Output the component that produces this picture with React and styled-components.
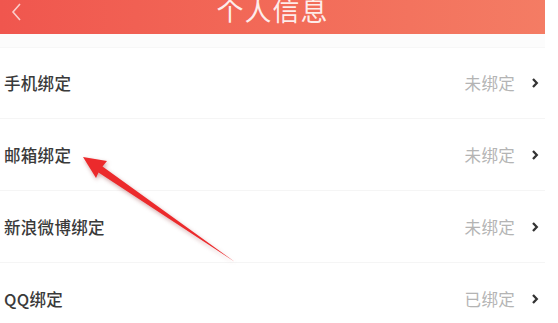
import React from 'react'
import styled, { createGlobalStyle } from 'styled-components'

const GlobalStyle = createGlobalStyle`
  html, body {
    margin: 0;
    padding: 0;
    background: #ffffff;
    font-family: "Noto Sans CJK SC", "Noto Sans", sans-serif;
    overflow: hidden;
  }
`

const Page = styled.div`
  position: relative;
  width: 545px;
  height: 323px;
  overflow: hidden;
  background: #ffffff;
`

const Header = styled.div`
  height: 34px;
  display: flex;
  align-items: flex-start;
  justify-content: center;
  position: relative;
  background: linear-gradient(90deg, #f0564e 0%, #f26a58 50%, #f47c64 100%);
  overflow: hidden;
`

const Back = styled.div`
  position: absolute;
  left: 10px;
  top: 2px;
  width: 14px;
  height: 18px;
`

const Title = styled.div`
  color: rgba(255, 255, 255, 0.88);
  font-size: 27px;
  line-height: 27px;
  margin-top: -4px;
  letter-spacing: 1px;
`

const Gap = styled.div`
  height: 13px;
  background: #fcfcfc;
  border-bottom: 1px solid #f7f7f7;
`

const List = styled.div`
  display: flex;
  flex-direction: column;
`

const Row = styled.div`
  height: 72px;
  display: flex;
  align-items: center;
  justify-content: space-between;
  padding: 0 4px 0 4px;
  margin-top: ${({ first }) => (first ? '-1px' : '0')};
  border-bottom: 1px solid #f5f5f5;
  box-sizing: border-box;
`

const Label = styled.div`
  font-size: 16.5px;
  font-weight: 500;
  color: #3a3a3a;
  letter-spacing: 0.3px;
`

const Side = styled.div`
  display: flex;
  align-items: center;
  gap: 16px;
`

const Status = styled.div`
  font-size: 16.5px;
  color: #b4b4b4;
  letter-spacing: 0.3px;
`

const Chevron = styled.svg`
  width: 8px;
  height: 12px;
  margin-right: 2px;
`

const Arrow = styled.svg`
  position: absolute;
  left: 0;
  top: 0;
  width: 545px;
  height: 323px;
  pointer-events: none;
  filter: drop-shadow(1px 2px 2px rgba(120, 0, 0, 0.35));
`

const rows = [
  { label: '手机绑定', status: '未绑定' },
  { label: '邮箱绑定', status: '未绑定' },
  { label: '新浪微博绑定', status: '未绑定' },
  { label: 'QQ绑定', status: '已绑定' },
]

export default function App() {
  return (
    <Page>
      <GlobalStyle />
      <Header>
        <Back>
          <svg width="14" height="18" viewBox="0 0 14 18">
            <polyline points="10,1 3,9 10,17" fill="none" stroke="rgba(255,255,255,0.7)" strokeWidth="1.6" />
          </svg>
        </Back>
        <Title>个人信息</Title>
      </Header>
      <Gap />
      <List>
        {rows.map((r, i) => (
          <Row key={r.label} first={i === 0}>
            <Label>{r.label}</Label>
            <Side>
              <Status>{r.status}</Status>
              <Chevron viewBox="0 0 8 12">
                <polyline points="2,2 5.8,6 2,10" fill="none" stroke="#333" strokeWidth="2.3" />
              </Chevron>
            </Side>
          </Row>
        ))}
      </List>
      <Arrow viewBox="0 0 545 323">
        <polygon points="83,157 107,161 102.5,166.5 235,262 98.5,172.5 96,178" fill="#ec2a2c" />
      </Arrow>
    </Page>
  )
}
